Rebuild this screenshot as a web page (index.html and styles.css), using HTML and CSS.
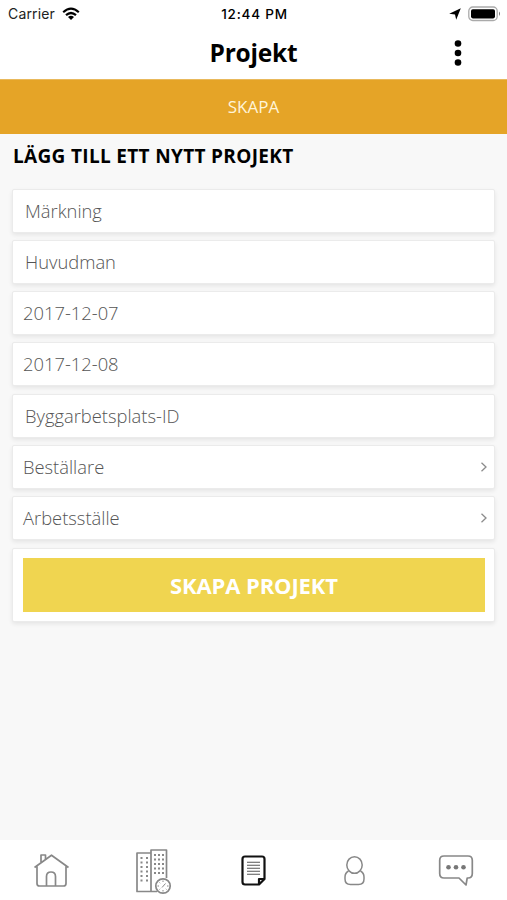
FILE: index.html
```html
<!DOCTYPE html>
<html lang="sv">
<head>
<meta charset="utf-8">
<title>Projekt</title>
<link rel="stylesheet" href="styles.css">
</head>
<body>
<div class="app">
  <div class="status">
    <div class="carrier"><span class="carrier-name">Carrier</span>
      <svg class="wifi" width="18" height="14" viewBox="0 0 18 14" fill="none" stroke="#000" stroke-width="2.2"><path d="M1.2 5.2Q9-1.8 16.8 5.2M4 8.2Q9 3.8 14 8.2"/><path d="M6 10Q9 7.600 12 10L9 13z" fill="#000" stroke="none"/></svg>
    </div>
    <time class="clock">12:44 PM</time>
    <div class="power">
      <svg width="12" height="12" viewBox="0 0 12 12"><path d="M11.800.2 7.200 11.800 6 6.500.2 5.800z"/></svg>
      <svg width="33" height="16" viewBox="0 0 33 16"><rect x=".8" y="1" width="28.400" height="13.500" rx="4" fill="#fff" stroke="#aaa" stroke-width="1.300"/><rect x="3" y="3.200" width="24" height="9.200" rx="1.800"/><path d="M31 5.500q2 2.200 0 4.500z" fill="#777"/></svg>
    </div>
  </div>
  <header class="header">
    <h1 class="title">Projekt</h1>
    <svg class="more" width="8" height="28" viewBox="0 0 8 28"><circle cx="4" cy="4.500" r="3.300"/><circle cx="4" cy="14" r="3.300"/><circle cx="4" cy="23.500" r="3.300"/></svg>
  </header>
  <div class="tab"><span class="tab-label">SKAPA</span></div>
  <main class="content">
    <h2 class="heading">LÄGG TILL ETT NYTT PROJEKT</h2>
    <form class="form">
      <div class="card field input"><span>Märkning</span></div>
      <div class="card field input"><span>Huvudman</span></div>
      <div class="card field"><span>2017-12-07</span></div>
      <div class="card field"><span>2017-12-08</span></div>
      <div class="card field input"><span>Byggarbetsplats-ID</span></div>
      <div class="card field"><span>Beställare</span><svg class="chevron" width="8" height="12" viewBox="0 0 8 12"><path d="M1.500 1.800 6 6 1.500 10.200"/></svg></div>
      <div class="card field"><span>Arbetsställe</span><svg class="chevron" width="8" height="12" viewBox="0 0 8 12"><path d="M1.500 1.800 6 6 1.500 10.200"/></svg></div>
      <div class="card action"><button class="submit" type="button">SKAPA PROJEKT</button></div>
    </form>
  </main>
  <nav class="nav">
    <svg class="icon" width="60" height="60" viewBox="21 840 60 60"><path d="M34.500 867.500 51.500 855.200 68.500 867.500M37 866.500V883.500Q37 886 39.500 886H63.500Q66 886 66 883.500V866.500M46.500 886V876.500Q46.500 872 51 872Q55.500 872 55.500 876.500V886M41 862V855H45.500V859"/></svg>
    <svg class="icon" width="60" height="60" viewBox="122 840 60 60"><path d="M151 891.500H137V853H151M151 891.500V850H166.500V878M151 891.500H157"/><path class="windows" d="M141.500 857V884M147 857V884M155 854V876M159 854V876M163 854V876"/><circle cx="163" cy="886" r="7.200" fill="#fff"/><path class="thin" d="M163 880.500V882M163 890V891.500M157.500 886H159M167 886H168.500M159.500 882.500l.7.700M166.500 889.500l-.7-.7M159.500 889.500l.7-.7M162 887.500 165.500 883.500"/></svg>
    <svg class="icon active" width="60" height="60" viewBox="224 840 60 60"><path d="M245 856.500H262Q264.500 856.500 264.500 859V879L259 884.500H245Q242.500 884.500 242.500 882V859Q242.500 856.500 245 856.500zM264.500 879H259V884.500"/><path class="lines" d="M247 862.200H260M247 865.200H260M247 868.200H260M247 871.200H260M247 874.300H260"/></svg>
    <svg class="icon slim" width="60" height="60" viewBox="325 840 60 60"><ellipse cx="354.500" cy="865" rx="7.700" ry="8.300"/><path d="M348.500 871Q345 873 345 877V879Q345 884.500 350.500 884.500H358.500Q364 884.500 364 879V877Q364 873 360.500 871"/></svg>
    <svg class="icon" width="60" height="60" viewBox="426 840 60 60"><path d="M444 856H468Q472.300 856 472.300 860.300V873.500Q472.300 878 468 878H467.200L466 885 459 878H444Q439.700 878 439.700 873.500V860.300Q439.700 856 444 856z"/><g class="dots"><circle cx="448.500" cy="867.300" r="2.300"/><circle cx="456" cy="867.300" r="2.300"/><circle cx="463.500" cy="867.300" r="2.300"/></g></svg>
  </nav>
</div>
</body>
</html>
```

FILE: styles.css
```css
* { box-sizing: border-box; }
body { margin: 0; font-family: "Open Sans", sans-serif; color: #000; }
.app { width: 507px; height: 900px; display: flex; flex-direction: column; background: #f8f8f8; overflow: hidden; }
.status { height: 27px; flex: none; padding: 0 6px 0 8px; display: grid; grid-template-columns: 1fr auto 1fr; align-items: center; background: #fff; font: 14px/27px Inter, sans-serif; }
.carrier { display: flex; align-items: center; gap: 7px; color: #222; }
.carrier-name { letter-spacing: .15px; }
.clock { padding-top: 1px; font-weight: 500; font-size: 13.5px; letter-spacing: .8px; line-height: 26px; }
.power { display: flex; justify-content: flex-end; align-items: center; gap: 7px; }
.header { height: 52px; flex: none; display: grid; grid-template-columns: 1fr auto 1fr; align-items: center; background: #fff; }
.title { grid-column: 2; margin: 0; font-size: 24.5px; line-height: 52px; font-weight: 700; letter-spacing: -.2px; }
.more { justify-self: end; margin: 0 45px 1px 0; }
.tab { height: 55px; flex: none; background: #e5a427; border-top: 1px solid #e9b95c; color: #fff4d8; text-align: center; font-size: 17px; line-height: 54px; }
.content { flex: 1; padding: 0 12px; }
.heading { margin: 0 0 10.500px 1px; font-size: 19px; line-height: 44px; font-weight: 700; letter-spacing: .33px; white-space: nowrap; }
.form { display: flex; flex-direction: column; gap: 7.300px; }
.card { background: #fff; border: 1px solid #ebebeb; border-radius: 2px; box-shadow: 0 2px 4px rgba(0,0,0,.08); }
.field { height: 44px; padding: 0 6px 1px 10px; display: flex; justify-content: space-between; align-items: center; color: #555; font-size: 18.350px; font-weight: 300; }
.input { padding-left: 12px; }
.chevron { margin-top: 1px; }
.chevron path { fill: none; stroke: #8c8c8c; stroke-width: 1.300; }
.action { height: 74px; padding: 9px 9px 9px 10px; }
.submit { display: block; width: 100%; height: 54px; border: 0; padding: 0; background: #f0d550; color: #fff; font: 700 22px/54px "Open Sans", sans-serif; letter-spacing: -.12px; }
.nav { height: 60px; flex: none; padding: 0 21px; display: flex; justify-content: space-between; background: #fff; }
.icon { fill: none; stroke: #888; stroke-width: 1.700; stroke-linejoin: round; }
.slim { stroke-width: 1.500; }
.windows { stroke-width: 2; stroke-dasharray: 2 2.500; }
.thin { stroke-width: 1; }
.active { stroke: #111; stroke-width: 2.200; }
.lines { stroke: #555; stroke-width: 1.100; }
.dots { fill: #777; stroke: none; }
```
